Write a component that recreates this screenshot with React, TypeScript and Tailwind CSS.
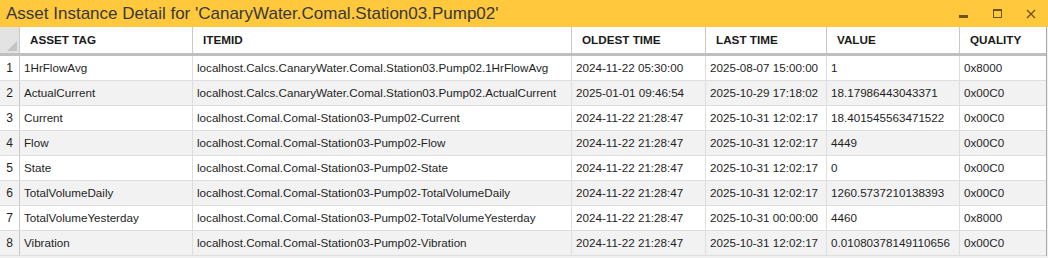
import React from 'react';

const rows = [
  ['1HrFlowAvg', 'localhost.Calcs.CanaryWater.Comal.Station03.Pump02.1HrFlowAvg', '2024-11-22 05:30:00', '2025-08-07 15:00:00', '1', '0x8000'],
  ['ActualCurrent', 'localhost.Calcs.CanaryWater.Comal.Station03.Pump02.ActualCurrent', '2025-01-01 09:46:54', '2025-10-29 17:18:02', '18.17986443043371', '0x00C0'],
  ['Current', 'localhost.Comal.Comal-Station03-Pump02-Current', '2024-11-22 21:28:47', '2025-10-31 12:02:17', '18.401545563471522', '0x00C0'],
  ['Flow', 'localhost.Comal.Comal-Station03-Pump02-Flow', '2024-11-22 21:28:47', '2025-10-31 12:02:17', '4449', '0x00C0'],
  ['State', 'localhost.Comal.Comal-Station03-Pump02-State', '2024-11-22 21:28:47', '2025-10-31 12:02:17', '0', '0x00C0'],
  ['TotalVolumeDaily', 'localhost.Comal.Comal-Station03-Pump02-TotalVolumeDaily', '2024-11-22 21:28:47', '2025-10-31 12:02:17', '1260.5737210138393', '0x00C0'],
  ['TotalVolumeYesterday', 'localhost.Comal.Comal-Station03-Pump02-TotalVolumeYesterday', '2024-11-22 21:28:47', '2025-10-31 00:00:00', '4460', '0x8000'],
  ['Vibration', 'localhost.Comal.Comal-Station03-Pump02-Vibration', '2024-11-22 21:28:47', '2025-10-31 12:02:17', '0.01080378149110656', '0x00C0'],
];

const headers = ['ASSET TAG', 'ITEMID', 'OLDEST TIME', 'LAST TIME', 'VALUE', 'QUALITY'];

const cols = 'grid grid-cols-[20px_173px_379px_134px_121px_133px_86px]';

const App: React.FC = () => {
  return (
    <div className="w-[1048px] h-[258px] overflow-hidden bg-[#f0f0f0] text-[#1e1e1e]" style={{ fontFamily: '"Liberation Sans", Arial, sans-serif' }}>
      {/* title bar */}
      <div className="h-[27px] bg-[#ffc83d] flex items-center justify-between pl-[6px]">
        <span className="text-[17px] leading-none text-[#383838]">Asset Instance Detail for 'CanaryWater.Comal.Station03.Pump02'</span>
        <div className="flex items-center h-full">
          <div className="w-[34px] h-full flex items-center justify-center">
            <div className="w-[9px] h-[3px] bg-[#6b5412] mt-[5px]"></div>
          </div>
          <div className="w-[34px] h-full flex items-center justify-center">
            <div className="w-[9px] h-[9px] border border-t-[2px] border-[#6b5412]"></div>
          </div>
          <div className="w-[34px] h-full flex items-center justify-center">
            <svg width="10" height="10" viewBox="0 0 10 10" stroke="#6b5412" strokeWidth="1.3">
              <path d="M1 1L9 9M9 1L1 9" />
            </svg>
          </div>
        </div>
      </div>

      <div className="w-[1047px] bg-white border-r border-[#a8a8a8]">
        {/* header */}
        <div className={`${cols} h-[29px] border-b-[3px] border-[#bfbfbf]`}>
          <div className="bg-[#e3e3e3] border-r border-[#c8c8c8] relative">
            <div className="absolute right-[2px] bottom-[2px] w-0 h-0 border-l-[10px] border-l-transparent border-b-[10px] border-b-[#c4c4c4]"></div>
          </div>
          {headers.map((h) => (
            <div key={h} className="border-r border-[#c8c8c8] last:border-r-0 flex items-center pl-[10px] text-[11.7px] font-bold text-[#1a1a1a]">
              {h}
            </div>
          ))}
        </div>

        {/* rows */}
        {rows.map((r, i) => (
          <div key={i} className={`${cols} h-[25px] border-b border-[#dedede] ${i % 2 === 1 ? 'bg-[#f2f2f2]' : 'bg-white'}`}>
            <div className="border-r border-[#c8c8c8] flex items-center justify-center text-[12px]">{i + 1}</div>
            {r.map((c, j) => (
              <div key={j} className="border-r border-[#dedede] last:border-r-0 flex items-center pl-[4px] text-[11.65px] whitespace-nowrap overflow-hidden">
                {c}
              </div>
            ))}
          </div>
        ))}
      </div>
    </div>
  );
};

export default App;
